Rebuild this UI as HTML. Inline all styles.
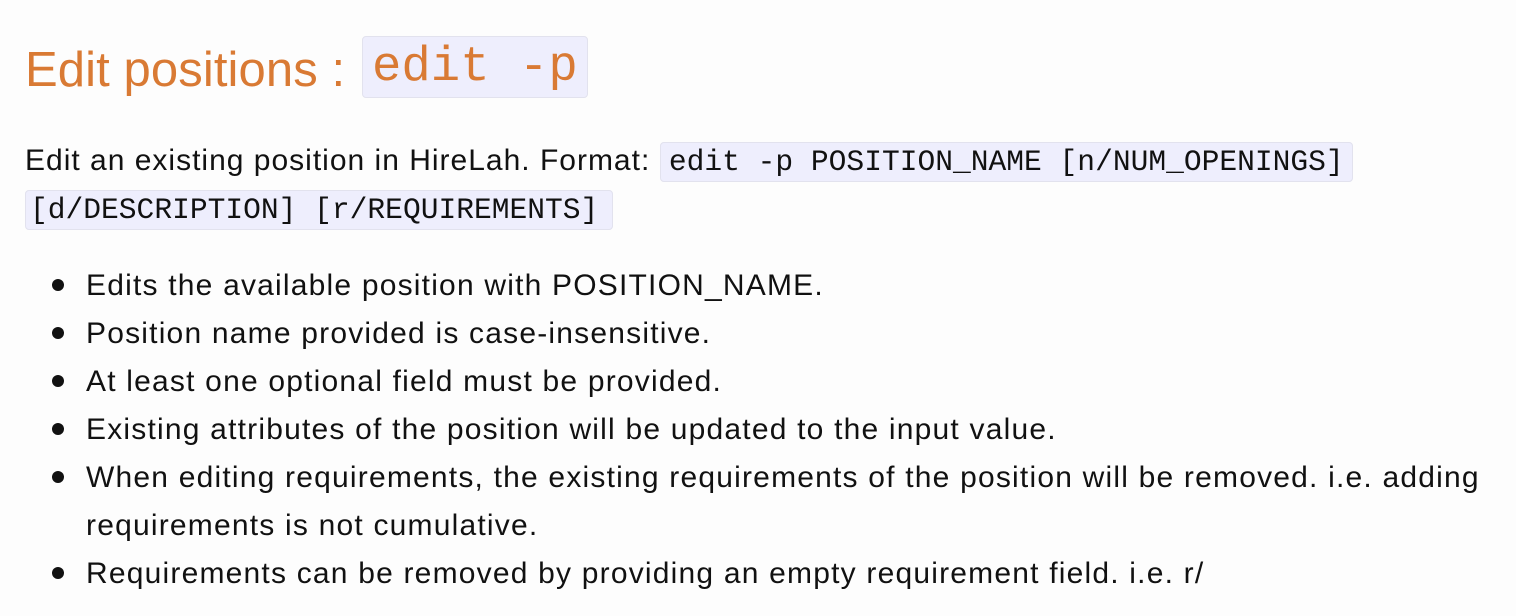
<!DOCTYPE html>
<html><head><style>
html,body{margin:0;padding:0;background:#fdfdfd;width:1516px;height:616px;overflow:hidden}
body{font-family:"Liberation Sans",sans-serif;color:#111;font-size:30px;letter-spacing:1.2px}
.a{position:absolute;white-space:nowrap}
code{font-family:"Liberation Mono",monospace;background:#eeeefd;border:1px solid #e2e2ee;border-radius:4px;letter-spacing:0}
h2{margin:0;font-weight:normal;color:#d97a34;font-size:49px;letter-spacing:0.1px}
.b{position:absolute;left:52px;width:12px;height:12px;border-radius:50%;background:#111}
</style></head><body>
<div class="a" style="left:25px;top:36px;height:64px;line-height:64px"><h2>Edit positions : <code style="font-size:49px;padding:0 9px;display:inline-block;line-height:60px;vertical-align:6px;margin-left:3px">edit -p</code></h2></div>
<div class="a" style="left:25px;top:137px;line-height:48px"><span style="letter-spacing:1px">Edit an existing position in HireLah. Format:</span> <code style="font-size:29.6px;padding:2px 8px">edit -p POSITION_NAME [n/NUM_OPENINGS]</code></div>
<div class="a" style="left:25px;top:185px;line-height:48px"><code style="font-size:29.6px;padding:2px 14px 2px 4px">[d/DESCRIPTION] [r/REQUIREMENTS]</code></div>
<div class="b" style="top:279px"></div><div class="a" style="left:86px;top:262px;line-height:48px">Edits the available position with POSITION_NAME.</div>
<div class="b" style="top:327px"></div><div class="a" style="left:86px;top:310px;line-height:48px">Position name provided is case-insensitive.</div>
<div class="b" style="top:375px"></div><div class="a" style="left:86px;top:358px;line-height:48px">At least one optional field must be provided.</div>
<div class="b" style="top:423px"></div><div class="a" style="left:86px;top:406px;line-height:48px">Existing attributes of the position will be updated to the input value.</div>
<div class="b" style="top:471px"></div><div class="a" style="left:86px;top:454px;line-height:48px">When editing requirements, the existing requirements of the position will be removed. i.e. adding</div>
<div class="a" style="left:86px;top:502px;line-height:48px">requirements is not cumulative.</div>
<div class="b" style="top:567px"></div><div class="a" style="left:86px;top:550px;line-height:48px">Requirements can be removed by providing an empty requirement field. i.e. r/</div>
</body></html>
